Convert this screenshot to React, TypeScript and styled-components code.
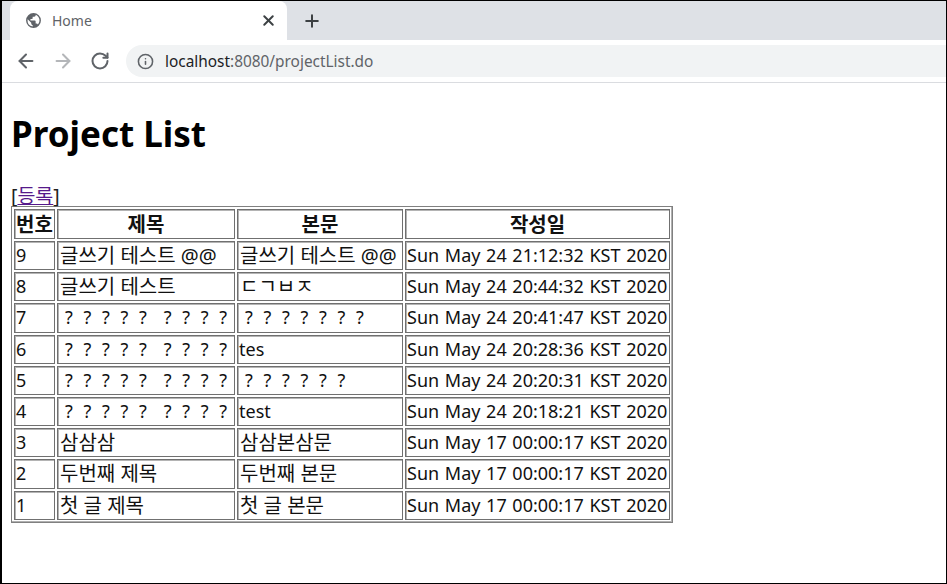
import React from 'react'
import styled, { createGlobalStyle } from 'styled-components'
import { ArrowLeft, ArrowRight, Info, Plus, RotateCw, X } from 'lucide-react'

const GlobalStyle = createGlobalStyle`
  html, body {
    margin: 0;
    padding: 0;
    background: #ffffff;
  }
`

const FONT = `"Noto Sans", "Noto Sans CJK KR", sans-serif`

const Window = styled.div`
  width: 947px;
  height: 584px;
  box-sizing: border-box;
  border: 1px solid #000000;
  border-left-width: 2px;
  overflow: hidden;
  color: #000000;
  font-family: ${FONT};
`

const TabStrip = styled.div`
  height: 39px;
  background: #dee1e6;
  display: flex;
  align-items: flex-end;
  padding-left: 8px;
`

const Tab = styled.div`
  width: 277px;
  height: 39px;
  box-sizing: border-box;
  background: #ffffff;
  border-radius: 8px 8px 0 0;
  display: flex;
  align-items: center;
  padding: 0 10px 0 15px;
  color: #5f6368;
  font-size: 14px;
`

const TabTitle = styled.span`
  flex: 1;
  margin-left: 10px;
`

const TabClose = styled.span`
  display: flex;
  color: #3c4043;
`

const NewTab = styled.div`
  margin-left: 15px;
  height: 39px;
  display: flex;
  align-items: center;
  color: #3c4043;
`

const Toolbar = styled.div`
  height: 43px;
  box-sizing: border-box;
  border-bottom: 1px solid #dadce0;
  display: flex;
  align-items: center;
  padding-left: 13px;
`

const NavButton = styled.div<{ $muted?: boolean }>`
  width: 22px;
  margin-right: 15px;
  display: flex;
  justify-content: center;
  color: ${({ $muted }) => ($muted ? '#b4b6b9' : '#5f6368')};
`

const AddressBar = styled.div`
  flex: 1;
  height: 32px;
  background: #f1f3f4;
  border-radius: 16px 0 0 16px;
  display: flex;
  align-items: center;
  padding-left: 11px;
  color: #5f6368;
  font-size: 15.4px;
`

const Host = styled.span`
  margin-left: 11px;
  color: #202124;
`

const Page = styled.main`
  padding: 0 9px;
`

const Title = styled.h1`
  margin: 0;
  padding-top: 26px;
  height: 77px;
  box-sizing: border-box;
  font-size: 35px;
  line-height: 50px;
  font-weight: 700;
`

const Links = styled.div`
  height: 23px;
  margin-top: 23px;
  font-size: 19.5px;
  line-height: 26px;
  color: #222222;

  a {
    color: #551a8b;
    text-decoration: underline;
  }
`

const Table = styled.table`
  table-layout: fixed;
  width: 662px;
  border: 1px solid #808080;
  box-shadow: inset -1px -1px 0 #b0b0b0;
  border-spacing: 2px;
  color: #111111;
`

const Head = styled.th<{ $width: number }>`
  width: ${({ $width }) => $width}px;
  height: 30px;
  box-sizing: border-box;
  padding: 0 1px;
  border: 1px solid #707070;
  box-shadow: inset 1px 1px 0 #b4b4b4;
  font-size: 20px;
  font-weight: 700;
  text-align: center;
  line-height: 27px;
  white-space: nowrap;
`

const Cell = styled.td<{ $latin?: boolean }>`
  height: 29.2px;
  box-sizing: border-box;
  padding: 0 2px;
  padding-left: ${({ $latin }) => ($latin ? '1px' : '2px')};
  border: 1px solid #707070;
  box-shadow: inset 1px 1px 0 #b4b4b4;
  font-size: ${({ $latin }) => ($latin ? '18px' : '20px')};
  word-spacing: ${({ $latin }) => ($latin ? '1px' : '0')};
  line-height: 27px;
  white-space: nowrap;
  overflow: hidden;
`

const Mark = styled.span`
  font-size: 18px;
  word-spacing: 6px;
  margin-left: 6px;

  & + & {
    margin-left: 17px;
  }
`

const Globe: React.FC = () => (
  <svg width="17" height="17" viewBox="0 0 24 24">
    <path
      fill="#5f6368"
      d="M12 1.5a10.5 10.5 0 1 0 0 21 10.5 10.5 0 0 0 0-21zM10.8 20.3A8.4 8.4 0 0 1 3.6 12c0-.6.1-1.3.2-1.9l5 5v1.1c0 1.2.9 2.1 2 2.1v2zm7.3-2.7a2.1 2.1 0 0 0-2-1.5h-1.1v-3.2c0-.6-.5-1-1-1H7.700v-2.100h2.100c.6 0 1-.5 1-1.100V6.600H13c1.200 0 2.100-.9 2.100-2.100V4A8.400 8.400 0 0 1 18.100 17.600z"
    />
  </svg>
)

const isLatin = (value: string): boolean => /^[\x20-\x7e]+$/.test(value)

// '|' splits the runs of question marks that have a wider gap between them
const CellText: React.FC<{ value: string }> = ({ value }) => {
  if (!value.startsWith('?')) return <>{value}</>
  return (
    <>
      {value.split('|').map((group) => (
        <Mark key={group}>{group}</Mark>
      ))}
    </>
  )
}

const rows = [
  ['9', '글쓰기 테스트 @@', '글쓰기 테스트 @@', 'Sun May 24 21:12:32 KST 2020'],
  ['8', '글쓰기 테스트', 'ㄷㄱㅂㅈ', 'Sun May 24 20:44:32 KST 2020'],
  ['7', '? ? ? ? ?|? ? ? ?', '? ? ? ? ? ? ?', 'Sun May 24 20:41:47 KST 2020'],
  ['6', '? ? ? ? ?|? ? ? ?', 'tes', 'Sun May 24 20:28:36 KST 2020'],
  ['5', '? ? ? ? ?|? ? ? ?', '? ? ? ? ? ?', 'Sun May 24 20:20:31 KST 2020'],
  ['4', '? ? ? ? ?|? ? ? ?', 'test', 'Sun May 24 20:18:21 KST 2020'],
  ['3', '삼삼삼', '삼삼본삼문', 'Sun May 17 00:00:17 KST 2020'],
  ['2', '두번째 제목', '두번째 본문', 'Sun May 17 00:00:17 KST 2020'],
  ['1', '첫 글 제목', '첫 글 본문', 'Sun May 17 00:00:17 KST 2020']
]

const columns: Array<[string, number]> = [
  ['번호', 41],
  ['제목', 178],
  ['본문', 166],
  ['작성일', 265]
]

export default function App(): React.JSX.Element {
  return (
    <Window>
      <GlobalStyle />
      <TabStrip>
        <Tab>
          <Globe />
          <TabTitle>Home</TabTitle>
          <TabClose>
            <X size={17} strokeWidth={2.8} />
          </TabClose>
        </Tab>
        <NewTab>
          <Plus size={20} strokeWidth={2.4} />
        </NewTab>
      </TabStrip>
      <Toolbar>
        <NavButton>
          <ArrowLeft size={22} strokeWidth={2.2} />
        </NavButton>
        <NavButton $muted>
          <ArrowRight size={22} strokeWidth={2.2} />
        </NavButton>
        <NavButton>
          <RotateCw size={20} strokeWidth={2.4} />
        </NavButton>
        <AddressBar>
          <Info size={17} strokeWidth={2.2} />
          <Host>localhost</Host>:8080/projectList.do
        </AddressBar>
      </Toolbar>
      <Page>
        <Title>Project List</Title>
        <Links>
          [<a href="#add">등록</a>]
        </Links>
        <Table>
          <thead>
            <tr>
              {columns.map(([label, width]) => (
                <Head key={label} $width={width}>
                  {label}
                </Head>
              ))}
            </tr>
          </thead>
          <tbody>
            {rows.map((row) => (
              <tr key={row[0]}>
                {row.map((value, index) => (
                  <Cell key={index} $latin={isLatin(value)}>
                    <CellText value={value} />
                  </Cell>
                ))}
              </tr>
            ))}
          </tbody>
        </Table>
      </Page>
    </Window>
  )
}
